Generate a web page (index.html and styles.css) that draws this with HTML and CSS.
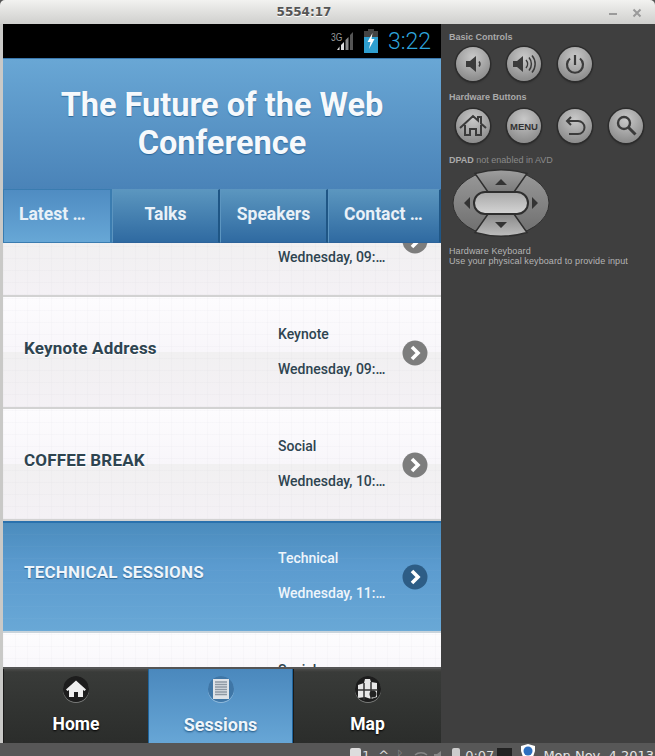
FILE: index.html
```html
<!DOCTYPE html>
<html>
<head>
    <meta charset="UTF-8">
    <title>5554:17</title>
    <link rel="stylesheet" href="styles.css">
</head>
<body>
    <div class="window">
        <div class="titlebar">
            <span class="titleText">5554:17</span>
            <div class="winButtons">
                <svg width="10" height="10" viewBox="0 0 10 10"><path d="M1 6h8" stroke="#9a9a9a" stroke-width="2"/></svg>
                <svg width="10" height="10" viewBox="0 0 10 10"><path d="M1.500 1.500l7 7M8.500 1.500l-7 7" stroke="#9a9a9a" stroke-width="2"/></svg>
            </div>
        </div>

        <div class="emulator">
            <div class="phone">
                <div class="statusBar">
                    <span class="netLabel">3G</span>
                    <svg class="signal" width="18" height="20" viewBox="0 0 18 20">
                        <path d="M17 1v18h-3V4z" fill="#555"/>
                        <path d="M12.500 6v13h-3V9z" fill="#888"/>
                        <path d="M8 11v8H5v-5z" fill="#ddd"/>
                        <path d="M3.500 15.500V19H1z" fill="#ddd"/>
                    </svg>
                    <svg class="battery" width="14" height="24" viewBox="0 0 14 24">
                        <path d="M4 0h6v2h4v22H0V2h4z" fill="#444"/>
                        <path d="M0 8h14v16H0z" fill="#2f9fd0"/>
                        <path d="M8.500 4L3.500 13h3l-1.500 7 5.500-10h-3z" fill="#fff"/>
                    </svg>
                    <span class="clock">3:22</span>
                </div>

                <header class="appHeader">The Future of the Web Conference</header>

                <nav class="tabs">
                    <div class="tab tabActive tabCut">Latest …</div>
                    <div class="tab">Talks</div>
                    <div class="tab">Speakers</div>
                    <div class="tab tabCut">Contact …</div>
                </nav>

                <div class="list">
                    <div class="row firstRow">
                        <div class="rowTitle"></div>
                        <div class="rowMeta rowMetaLow"><span>Wednesday, 09:…</span></div>
                        <svg class="arrow"><use href="#arrowIcon"/></svg>
                    </div>
                    <div class="row">
                        <div class="rowTitle">Keynote Address</div>
                        <div class="rowMeta"><span>Keynote</span><span>Wednesday, 09:…</span></div>
                        <svg class="arrow"><use href="#arrowIcon"/></svg>
                    </div>
                    <div class="row">
                        <div class="rowTitle">COFFEE BREAK</div>
                        <div class="rowMeta"><span>Social</span><span>Wednesday, 10:…</span></div>
                        <svg class="arrow"><use href="#arrowIcon"/></svg>
                    </div>
                    <div class="row rowActive">
                        <div class="rowTitle">TECHNICAL SESSIONS</div>
                        <div class="rowMeta"><span>Technical</span><span>Wednesday, 11:…</span></div>
                        <svg class="arrow"><use href="#arrowIcon"/></svg>
                    </div>
                    <div class="row">
                        <div class="rowTitle"></div>
                        <div class="rowMeta"><span>Social</span></div>
                    </div>
                </div>

                <footer class="bottomNav">
                    <div class="navItem">
                        <svg class="navIcon" viewBox="0 0 26 26">
                            <circle cx="13" cy="13" r="13" fill="#1d1d1d"/>
                            <path d="M13 4.500L3 13.500l1.500 1.500L6 14v7h5v-5h4v5h5v-7l1.500 1 1.500-1.500z" fill="#eee"/>
                        </svg>
                        <span>Home</span>
                    </div>
                    <div class="navItem navActive">
                        <svg class="navIcon" viewBox="0 0 26 26">
                            <circle cx="13" cy="13" r="13" fill="#3f76a6"/>
                            <path d="M5 3h16v20H5z" fill="#dfe3e8"/>
                            <path d="M7 6h12M7 8.500h12M7 11h12M7 13.500h12M7 16h12M7 18.500h12" stroke="#8d98a3" stroke-width="1.300"/>
                        </svg>
                        <span>Sessions</span>
                    </div>
                    <div class="navItem">
                        <svg class="navIcon" viewBox="0 0 26 26">
                            <circle cx="13" cy="13" r="13" fill="#1d1d1d"/>
                            <path d="M3 9l6-2 1-4h5l1 3 6 1v14l-6 2-6-2-7 1z" fill="#e8e8e8"/>
                            <path d="M3 14h20M9 7v17M16 6v17" stroke="#333" stroke-width="1.500"/>
                            <circle cx="18" cy="18" r="3.500" fill="#222"/>
                        </svg>
                        <span>Map</span>
                    </div>
                </footer>
            </div>

            <aside class="panel">
                <h4>Basic Controls</h4>
                <div class="btnRow">
                    <div class="hwButton"><svg viewBox="0 0 34 34"><path d="M10 14h4l6-5v16l-6-5h-4z" fill="#3b3b3b"/><path d="M23 14.500a4 4 0 0 1 0 5" fill="none" stroke="#3b3b3b" stroke-width="1.500"/></svg></div>
                    <div class="hwButton"><svg viewBox="0 0 34 34"><path d="M6 14h4l6-5v16l-6-5H6z" fill="#3b3b3b"/><path d="M19 13a6 6 0 0 1 0 8M22 10.500a10 10 0 0 1 0 13M25 8.500a13 13 0 0 1 0 17" fill="none" stroke="#3b3b3b" stroke-width="1.500"/></svg></div>
                    <div class="hwButton"><svg viewBox="0 0 34 34"><path d="M12 11.500a8 8 0 1 0 10 0" fill="none" stroke="#3b3b3b" stroke-width="2.200"/><path d="M17 8v10" stroke="#3b3b3b" stroke-width="2.200"/></svg></div>
                </div>
                <h4 class="hwTitle">Hardware Buttons</h4>
                <div class="btnRow btnRowLow">
                    <div class="hwButton"><svg viewBox="0 0 34 34"><path d="M4 19L17 7l5 4.500V8h3v6.500l5 4.500M9 16v10h5v-6h6v6h5V16" fill="none" stroke="#3b3b3b" stroke-width="2"/></svg></div>
                    <div class="hwButton"><span class="menuLabel">MENU</span></div>
                    <div class="hwButton"><svg viewBox="0 0 34 34"><path d="M13 8l-4 4 4 4M9 12h11a6 6 0 0 1 0 13h-9" fill="none" stroke="#3b3b3b" stroke-width="2"/></svg></div>
                    <div class="hwButton"><svg viewBox="0 0 34 34"><circle cx="15" cy="14" r="6" fill="none" stroke="#3b3b3b" stroke-width="2.400"/><path d="M19.500 18.500l7 7" stroke="#3b3b3b" stroke-width="3"/></svg></div>
                </div>
                <h4 class="dpadTitle">DPAD <span>not enabled in AVD</span></h4>
                <svg class="dpad" width="98" height="68" viewBox="0 0 98 68">
                    <defs>
                        <linearGradient id="padSide" x1="0" y1="0" x2="0" y2="1"><stop offset="0" stop-color="#9a9a9a"/><stop offset="1" stop-color="#6d6d6d"/></linearGradient>
                        <linearGradient id="padDown" x1="0" y1="0" x2="0" y2="1"><stop offset="0" stop-color="#8a8a8a"/><stop offset="1" stop-color="#bdbdbd"/></linearGradient>
                        <linearGradient id="padUp" x1="0" y1="0" x2="0" y2="1"><stop offset="0" stop-color="#9f9f9f"/><stop offset="1" stop-color="#7a7a7a"/></linearGradient>
                        <linearGradient id="padMid" x1="0" y1="0" x2="0" y2="1"><stop offset="0" stop-color="#a8a8a8"/><stop offset="1" stop-color="#d5d5d5"/></linearGradient>
                    </defs>
                    <ellipse cx="49" cy="34" rx="48" ry="33" fill="url(#padSide)" stroke="#2f2f2f"/>
                    <path d="M23 4.500Q49-3 75 4.500L62 23H36z" fill="url(#padUp)" stroke="#2f2f2f" stroke-width="1.500"/>
                    <path d="M23 63.500Q49 71 75 63.500L62 45H36z" fill="url(#padDown)" stroke="#2f2f2f" stroke-width="1.500"/>
                    <rect x="22" y="23" width="54" height="22" rx="11" fill="url(#padMid)" stroke="#2f2f2f" stroke-width="2"/>
                    <path d="M49 10l6 6H43zM49 59l6-6H43zM12 34l6-6v12zM86 34l-6-6v12z" fill="#333"/>
                </svg>
                <p class="kbdHelp">Hardware Keyboard<br>Use your physical keyboard to provide input</p>
            </aside>
        </div>

        <div class="taskbar">
            <span class="trayBox"></span><span class="trayCount">1</span>
            <span class="trayCaret">^</span>
            <span class="trayDim">ᛒ</span>
            <svg class="trayWifi" width="14" height="10" viewBox="0 0 14 10"><path d="M1 5a9 9 0 0 1 12 0M3 8a6 6 0 0 1 8 0" fill="none" stroke="#888" stroke-width="1.500"/></svg>
            <svg class="trayVolume" width="14" height="10" viewBox="0 0 14 10"><path d="M1 4h3l4-3v9H1z" fill="#888"/></svg>
            <span class="trayBattery"></span><span class="trayTime">0:07</span>
            <span class="trayMail"></span>
            <svg class="trayShield" width="16" height="13" viewBox="0 0 16 13"><path d="M8 0l7 2v5l-2 6H3L1 7V2z" fill="#fff"/><circle cx="8" cy="7" r="4.500" fill="#2d6fc0"/></svg>
            <span class="trayDate">Mon Nov  4 2013</span>
        </div>
    </div>

    <svg width="0" height="0" class="defs">
        <symbol id="arrowIcon" viewBox="0 0 26 26">
            <circle cx="13" cy="13" r="12.500" fill="currentColor"/>
            <path d="M10 7l6 6-6 6" fill="none" stroke="#fff" stroke-width="3.600"/>
        </symbol>
    </svg>
</body>
</html>
```

FILE: styles.css
```css
html, body {
    padding: 0;
    margin: 0;
    width: 100%;
    height: 100%;
    overflow: hidden;
}

body {
    font-family: Roboto, sans-serif;
    background-color: #555;
}

.defs {
    position: absolute;
}

.window {
    width: 655px;
    height: 756px;
    display: flex;
    flex-direction: column;
    overflow: hidden;
}

.titlebar {
    flex: 0 0 24px;
    display: flex;
    align-items: center;
    justify-content: center;
    position: relative;
    background: linear-gradient(#f2f2f0, #cfcfcd);
    border-radius: 5px 5px 0 0;
}

.titleText {
    font: bold 12px "DejaVu Sans", sans-serif;
    color: #555;
    margin-right: 47px;
    text-shadow: 0 1px 0 #fff;
}

.winButtons {
    position: absolute;
    right: 13px;
    top: 8px;
    display: flex;
    gap: 14px;
}

.emulator {
    flex: 0 0 719px;
    min-height: 0;
    overflow: hidden;
    display: flex;
    background-color: #c9c9c7;
    padding-left: 3px;
}

.phone {
    flex: 0 0 438px;
    min-height: 0;
    display: flex;
    flex-direction: column;
    background-color: #fff;
    overflow: hidden;
}

.statusBar {
    flex: 0 0 34px;
    background-color: #000;
    display: flex;
    align-items: center;
    justify-content: flex-end;
    padding-right: 10px;
    box-sizing: border-box;
}

.netLabel {
    font: 10px "Liberation Sans", sans-serif;
    color: #999;
    margin: -8px -7px 0 0;
    transform: scaleX(.85);
}

.signal {
    margin-right: 10px;
}

.battery {
    margin-right: 10px;
}

.clock {
    font: 300 23px Roboto, sans-serif;
    color: #2ea5dc;
}

.appHeader {
    flex: 0 0 131px;
    box-sizing: border-box;
    padding: 27px 40px 0;
    text-align: center;
    font-size: 32.500px;
    line-height: 38px;
    font-weight: 700;
    color: #f6f9fc;
    border-top: 1px solid #3a78ad;
    background: linear-gradient(#69a7d5, #4a83b8);
    text-shadow: 0 1px 1px rgba(0, 60, 110, .5);
}

.tabs {
    flex: 0 0 54px;
    display: grid;
    grid-template-columns: 109px 108px 108px 113px;
    position: relative;
    z-index: 2;
}

.tab {
    display: flex;
    align-items: center;
    justify-content: center;
    font-size: 17.500px;
    font-weight: 700;
    color: #e9f1f8;
    padding-bottom: 4px;
    box-sizing: border-box;
    border: 1px solid #5c95c0;
    border-right: 2px solid #1f5685;
    border-bottom-color: #2d639a;
    background: linear-gradient(#5b96bf, #2f6aa1);
}

.tabCut {
    justify-content: flex-start;
    padding-left: 15px;
}

.tabActive {
    background: linear-gradient(#4f8cc2, #67a7d6);
    border-color: #3a7cb0;
}

.list {
    flex: 1 1 0;
    min-height: 0;
    overflow: hidden;
}

.row {
    height: 112px;
    box-sizing: border-box;
    display: flex;
    align-items: flex-start;
    color: #2e4450;
    border-bottom: 2px solid #d2d2d2;
    background-image:
        repeating-linear-gradient(90deg, rgba(120, 120, 140, .03) 0 1px, transparent 1px 12px),
        repeating-linear-gradient(0deg, rgba(120, 120, 140, .03) 0 1px, transparent 1px 12px),
        linear-gradient(#fdfcfe, #f8f6fa 50%, #f1f0f1 50%, #f4f1f5);
}

.firstRow {
    margin-top: -58px;
}

.rowTitle {
    flex: 0 0 254px;
    padding: 41px 0 0 21px;
    font-size: 17px;
    line-height: 20px;
    font-weight: 700;
    letter-spacing: .2px;
    text-shadow: 0 1px 0 #fff;
}

.rowMeta {
    flex: 0 0 124px;
    display: flex;
    flex-direction: column;
    gap: 18px;
    padding-top: 29px;
    font-size: 14px;
    font-weight: 500;
    line-height: 17px;
}

.rowMetaLow {
    padding-top: 64px;
}

.arrow {
    width: 26px;
    height: 26px;
    margin-top: 43px;
    color: #7d7d7d;
}

.rowActive {
    color: #eef5fb;
    border-top: 2px solid #2a71ad;
    border-bottom-color: #c9d4dc;
    background-image:
        repeating-linear-gradient(0deg, rgba(255, 255, 255, .025) 0 1px, transparent 1px 12px),
        linear-gradient(#4b8cbd, #5b9bcf 40%, #69a8d6);
}

.rowActive .rowTitle {
    padding-top: 39px;
    text-shadow: 0 1px 1px rgba(0, 50, 90, .5);
}

.rowActive .rowMeta {
    padding-top: 27px;
}

.rowActive .arrow {
    margin-top: 41px;
    color: #2d5d86;
}

.bottomNav {
    flex: 0 0 76px;
    box-sizing: border-box;
    display: grid;
    grid-template-columns: 145px 145px 148px;
    background: linear-gradient(#4a4a48 0, #393b39 4%, #323432 50%, #2b2d2b);
    border-top: 2px solid #555;
    position: relative;
    z-index: 2;
}

.navItem {
    display: flex;
    flex-direction: column;
    align-items: center;
    padding-top: 7px;
    box-sizing: border-box;
    font-size: 17.500px;
    font-weight: 700;
    color: #fff;
    text-shadow: 0 1px 2px #000;
    gap: 12px;
    border-left: 1px solid #1a1a1a;
}

.navIcon {
    width: 26px;
    height: 26px;
    border-radius: 50%;
    box-shadow: 0 1px 0 rgba(255, 255, 255, .35);
}

.navActive {
    font-size: 18px;
    background: linear-gradient(#4a88bd, #67a6d6);
    border-left: 1px solid #20659c;
    border-right: 1px solid #20659c;
    text-shadow: 0 1px 2px rgba(0, 50, 90, .7);
    color: #eef5fb;
}

.panel {
    flex: 1 1 auto;
    min-width: 0;
    background-color: #3f3f3f;
    padding: 8px 0 0 8px;
    color: #aaa;
    font: 9px "Liberation Sans", sans-serif;
}

.panel h4 {
    margin: 0;
    height: 11px;
    line-height: 11px;
    font-size: 9px;
    font-weight: 700;
    color: #aaa;
}

.panel h4 span {
    font-weight: 400;
    color: #8a8a8a;
}

.btnRow {
    display: flex;
    gap: 17px;
    padding: 4px 0 0 7px;
}

.btnRowLow {
    padding-top: 6px;
}

.hwButton {
    width: 34px;
    height: 34px;
    border-radius: 50%;
    display: flex;
    align-items: center;
    justify-content: center;
    background: radial-gradient(circle at 50% 30%, #c9c9c9, #8f8f8f 75%);
    box-shadow: 0 0 0 1.500px #2c2c2c, 0 2px 2px #2a2a2a;
}

.hwButton svg {
    width: 34px;
    height: 34px;
}

.menuLabel {
    font: bold 9.500px "Liberation Sans", sans-serif;
    color: #333;
}

.hwTitle {
    margin-top: 11px !important;
}

.dpadTitle {
    margin-top: 12px !important;
}

.dpad {
    display: block;
    margin: 3px 0 0 3px;
}

.kbdHelp {
    margin: 9px 0 0;
    font-size: 9px;
    line-height: 10px;
    letter-spacing: .1px;
    color: #b4b4b4;
    white-space: nowrap;
}

.taskbar {
    flex: 0 0 13px;
    background-color: #575757;
    display: flex;
    align-items: flex-start;
    padding: 5px 0 0 350px;
    box-sizing: border-box;
    overflow: hidden;
    font: 13px "DejaVu Sans", sans-serif;
    color: #ddd;
    white-space: pre;
}

.trayBox {
    width: 11px;
    height: 10px;
    border-radius: 2px;
    background-color: #ddd;
}

.trayCount {
    margin-left: 1px;
}

.trayCaret {
    margin-left: 8px;
}

.trayDim {
    margin-left: 7px;
    color: #888;
}

.trayWifi {
    margin: 2px 0 0 10px;
}

.trayVolume {
    margin: 2px 0 0 5px;
}

.trayBattery {
    width: 8px;
    height: 10px;
    margin-left: 5px;
    background-color: #ccc;
    border-radius: 2px;
}

.trayTime {
    margin-left: 5px;
}

.trayMail {
    width: 15px;
    height: 10px;
    margin-left: 3px;
    background-color: #222;
}

.trayShield {
    margin: -4px 0 0 8px;
}

.trayDate {
    margin-left: 7px;
    color: #e5e5e5;
}
```
